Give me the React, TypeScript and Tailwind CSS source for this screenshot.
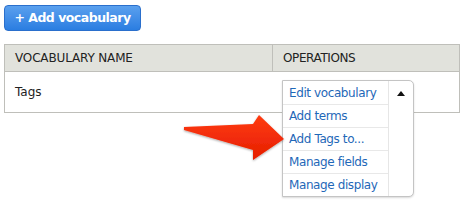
export default function App() {
  const ops = ["Edit vocabulary", "Add terms", "Add Tags to...", "Manage fields", "Manage display"];
  return (
    <div className="relative w-[464px] h-[204px] bg-white overflow-hidden" style={{ fontFamily: '"DejaVu Sans", Verdana, sans-serif' }}>
      <div className="pl-[4px] pt-[5px]">
        <button className="h-[26px] w-[137px] rounded-[4px] border border-[#2a6fcc] bg-gradient-to-b from-[#5aa0ee] to-[#2a7de1] text-white font-bold text-[12.5px] tracking-[-0.5px] leading-none">
          + Add vocabulary
        </button>
      </div>

      <table className="mt-[13px] ml-[4px] w-[456px] border-collapse border border-[#bfbfba] text-[12px] text-[#222]">
        <thead>
          <tr className="bg-[#e1e2dc] h-[27px]">
            <th className="w-[268px] border border-[#bfbfba] text-left font-normal pl-[10px] tracking-[-0.15px]">VOCABULARY NAME</th>
            <th className="border border-[#bfbfba] text-left font-normal pl-[10px] tracking-[-0.4px]">OPERATIONS</th>
          </tr>
        </thead>
        <tbody>
          <tr className="h-[41px]">
            <td className="pl-[10px] text-[12px]">Tags</td>
            <td></td>
          </tr>
        </tbody>
      </table>

      <div className="absolute left-[282px] top-[80px] w-[132px] flex border border-[#c4c4c4] rounded-tr-[5px] rounded-br-[5px] bg-white shadow-[0_1px_2px_rgba(0,0,0,0.15)]">
        <ul className="w-[106px] border-r border-[#e6e6e6]">
          {ops.map((o, i) => (
            <li key={o} className={`h-[23px] flex items-center pl-[6px] text-[12px] text-[#1f68b8] tracking-[-0.4px] ${i > 0 ? "border-t border-[#e8e8e8]" : ""}`}>
              {o}
            </li>
          ))}
        </ul>
        <div className="flex-1 flex justify-center pt-[10px]">
          <svg width="8" height="5" viewBox="0 0 8 5">
            <path d="M0 5 L4 0 L8 5 Z" fill="#111" />
          </svg>
        </div>
      </div>

      {/* annotation arrow */}
      <svg className="absolute left-0 top-0" width="464" height="204" viewBox="0 0 464 204">
        <defs>
          <linearGradient id="ar" x1="0" y1="0" x2="0" y2="1">
            <stop offset="0" stopColor="#ff3b12" />
            <stop offset="1" stopColor="#e51e00" />
          </linearGradient>
          <filter id="sh" x="-10%" y="-10%" width="130%" height="140%">
            <feDropShadow dx="0" dy="1" stdDeviation="0.8" floodColor="#000" floodOpacity="0.35" />
          </filter>
        </defs>
        <path d="M184 127 L253 124 L259 115 L284 139 L253 160 L253 150 L184 130 Z" fill="url(#ar)" filter="url(#sh)" />
      </svg>
    </div>
  );
}
